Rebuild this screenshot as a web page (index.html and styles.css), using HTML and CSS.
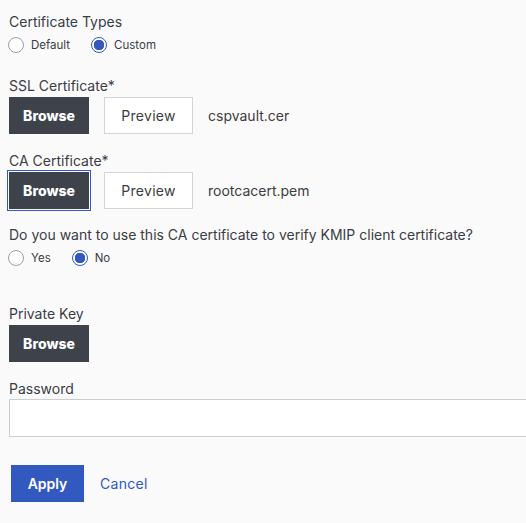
FILE: index.html
```html
<!DOCTYPE HTML>
<html>
<head>
  <title>Certificate Settings</title>
  <link rel="stylesheet" href="styles.css">
</head>
<body>
  <div id="container">
    <div class="label">Certificate Types</div>
    <div class="radio-row">
      <label class="option"><input type="radio" name="cert-type" /> Default</label>
      <label class="option"><input type="radio" name="cert-type" checked /> Custom</label>
    </div>

    <div class="label ssl-label">SSL Certificate*</div>
    <div class="file-row">
      <button class="browse">Browse</button>
      <button class="preview">Preview</button>
      <span class="file-name">cspvault.cer</span>
    </div>

    <div class="label ca-label">CA Certificate*</div>
    <div class="file-row">
      <button class="browse focused">Browse</button>
      <button class="preview">Preview</button>
      <span class="file-name">rootcacert.pem</span>
    </div>

    <div class="label question">Do you want to use this CA certificate to verify KMIP client certificate?</div>
    <div class="radio-row">
      <label class="option"><input type="radio" name="verify" /> Yes</label>
      <label class="option"><input type="radio" name="verify" checked /> No</label>
    </div>

    <div class="label key-label">Private Key</div>
    <div class="file-row">
      <button class="browse">Browse</button>
    </div>

    <div class="label password-label">Password</div>
    <input type="password" id="password" />

    <div class="actions">
      <button class="apply">Apply</button>
      <a class="cancel" href="#">Cancel</a>
    </div>
  </div>
</body>
</html>
```

FILE: styles.css
```css
html, body {
  margin: 0;
  padding: 0;
  background: #fafafa;
  overflow: hidden;
}
body {
  font-family: Inter, "Noto Sans", sans-serif;
  color: #3a3d44;
}
#container {
  padding: 12px 0 0 9px;
}

.label {
  font-size: 14px;
  line-height: 20px;
  height: 20px;
}
.ssl-label {
  margin-top: 21px;
  margin-bottom: 1px;
}
.ca-label {
  margin-top: 17px;
  margin-bottom: 1px;
}
.question {
  margin-top: 16px;
}
.key-label {
  margin-top: 36px;
  margin-bottom: 1px;
}
.password-label {
  margin-top: 17px;
}

.radio-row {
  display: flex;
  align-items: center;
  height: 20px;
  margin-top: 3px;
  margin-left: -1px;
}
.option {
  display: flex;
  align-items: center;
  gap: 7px;
  font-size: 11.5px;
  margin-right: 21px;
}
.option input {
  -webkit-appearance: none;
  appearance: none;
  width: 16px;
  height: 16px;
  margin: 0;
  border: 1px solid #9c9ca8;
  border-radius: 50%;
  background: #fff;
}
.option input:checked {
  border-color: #3259bf;
  background: radial-gradient(circle, #3259bf 0, #3259bf 5px, #fff 5.5px);
}

.file-row {
  display: flex;
  align-items: center;
  gap: 15px;
  height: 37px;
}
button {
  font-family: inherit;
  font-size: 14px;
  height: 37px;
  cursor: pointer;
}
.browse {
  width: 80px;
  border: none;
  background: #3d424b;
  color: #fff;
  font-weight: 800;
}
.browse.focused {
  outline: 1px solid #3259bf;
  outline-offset: 1px;
}
.preview {
  width: 89px;
  border: 1px solid #d3d3dc;
  background: #fff;
  color: #3a3d44;
  letter-spacing: 0.3px;
}
.file-name {
  font-size: 14px;
}

#password {
  display: block;
  box-sizing: border-box;
  width: 540px;
  height: 38px;
  margin: 0;
  border: 1px solid #cdcdd6;
  background: #fff;
}

.actions {
  display: flex;
  align-items: center;
  gap: 16px;
  margin: 28px 0 0 2px;
}
.apply {
  width: 73px;
  border: none;
  background: #3259bf;
  color: #fff;
  font-weight: 600;
}
.cancel {
  font-size: 14px;
  color: #3259bf;
  text-decoration: none;
  letter-spacing: 0.3px;
}
```
